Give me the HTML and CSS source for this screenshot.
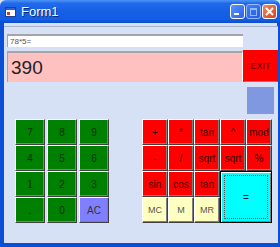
FILE: index.html
```html
<!DOCTYPE html>
<html lang="en">
<head>
    <meta charset="UTF-8">
    <title>Form1</title>
    <link rel="stylesheet" href="styles.css">
</head>
<body>
    <div class="window">
        <div class="titlebar">
            <svg class="app-icon" width="11" height="10" viewBox="0 0 11 10">
                <rect x="0.5" y="0.5" width="10" height="9" fill="#fff" stroke="#1c3f94"/>
                <rect x="1" y="1" width="9" height="2" fill="#2a5fd8"/>
                <rect x="2" y="5" width="3" height="3" fill="#d04020"/>
            </svg>
            <span class="title">Form1</span>
            <div class="title-buttons">
                <div class="tbtn tbtn-min"><span></span></div>
                <div class="tbtn tbtn-max"><span></span></div>
                <div class="tbtn tbtn-close">
                    <svg width="9" height="9" viewBox="0 0 9 9">
                        <path d="M1 1 L8 8 M8 1 L1 8" stroke="#fff" stroke-width="2"/>
                    </svg>
                </div>
            </div>
        </div>
        <div class="frame">
            <div class="client">
                <div class="row-expr">
                    <div class="expr">78*5=</div>
                </div>
                <div class="row-display">
                    <div class="display">390</div>
                    <button class="btn exit">EXIT</button>
                </div>
                <div class="row-mem">
                    <div class="mem-box"></div>
                </div>
                <div class="pads">
                    <div class="pad-num">
                        <button class="btn green">7</button>
                        <button class="btn green">8</button>
                        <button class="btn green">9</button>
                        <button class="btn green">4</button>
                        <button class="btn green">5</button>
                        <button class="btn green">6</button>
                        <button class="btn green">1</button>
                        <button class="btn green">2</button>
                        <button class="btn green">3</button>
                        <button class="btn green">.</button>
                        <button class="btn green">0</button>
                        <button class="btn clear">AC</button>
                    </div>
                    <div class="pad-ops">
                        <button class="btn red">+</button>
                        <button class="btn red">*</button>
                        <button class="btn red">tan</button>
                        <button class="btn red">^</button>
                        <button class="btn red">mod</button>
                        <button class="btn red">-</button>
                        <button class="btn red">/</button>
                        <button class="btn red">sqrt</button>
                        <button class="btn red">sqrt</button>
                        <button class="btn red">%</button>
                        <button class="btn red">sin</button>
                        <button class="btn red">cos</button>
                        <button class="btn red">tan</button>
                        <button class="btn equals"><span>=</span></button>
                        <button class="btn memory">MC</button>
                        <button class="btn memory">M</button>
                        <button class="btn memory">MR</button>
                    </div>
                </div>
            </div>
        </div>
    </div>
</body>
</html>
```

FILE: styles.css
```css
body {
    margin: 0;
    padding: 0;
    background-color: #d7e1f6;
    font-family: "Liberation Sans", Arial, sans-serif;
}
.window {
    width: 280px;
    height: 247px;
    display: flex;
    flex-direction: column;
    overflow: hidden;
}
.titlebar {
    height: 23px;
    display: flex;
    align-items: center;
    padding: 0 3px 0 5px;
    background: linear-gradient(#4a95f8 0%, #2269ea 15%, #1660e6 50%, #125de3 85%, #0a4ccc 100%);
    border-radius: 6px 6px 0 0;
}
.app-icon {
    margin-right: 5px;
}
.title {
    color: #fff;
    font-family: "Liberation Sans", Arial, sans-serif;
    font-size: 13px;
    text-shadow: 1px 1px 0 #0a2a80;
    flex: 1;
}
.title-buttons {
    display: flex;
    gap: 1px;
}
.tbtn {
    width: 13px;
    height: 13px;
    border: 1px solid #fff;
    border-radius: 3px;
    background: linear-gradient(135deg, #5a95ff, #2a62e8);
    position: relative;
}
.tbtn-min span {
    position: absolute;
    left: 3px;
    bottom: 3px;
    width: 5px;
    height: 2px;
    background: #fff;
}
.tbtn-max {
    opacity: 0.55;
}
.tbtn-max span {
    position: absolute;
    left: 3px;
    top: 3px;
    width: 5px;
    height: 5px;
    border: 1px solid #fff;
    border-top-width: 2px;
}
.tbtn-close {
    background: linear-gradient(135deg, #f08a60, #d8401a);
    display: flex;
    align-items: center;
    justify-content: center;
}
.frame {
    flex: 1;
    display: flex;
    border-left: 4px solid #0a4fd6;
    border-right: 3px solid #0a4fd6;
    border-bottom: 4px solid #0a4fd6;
}
.client {
    flex: 1;
    margin-top: 3px;
    border-top: 1px solid #a6b0c6;
    background-color: #d7e1f6;
}
.row-expr {
    padding: 7px 0 0 3px;
}
.expr {
    width: 233px;
    height: 11px;
    background: #fff;
    border-top: 2px solid #a5a5a5;
    border-left: 1px solid #a5a5a5;
    font-size: 8px;
    line-height: 11px;
    color: #555;
    padding-left: 2px;
}
.row-display {
    display: flex;
    align-items: flex-end;
    padding: 3px 0 0 3px;
}
.display {
    width: 231px;
    height: 29px;
    background: #ffc0c0;
    border-top: 2px solid #a5a5a5;
    border-left: 1px solid #a5a5a5;
    border-right: 1px solid #fff;
    padding-left: 3px;
    font-size: 19px;
    line-height: 29px;
    color: #222;
}
.btn {
    margin: 0;
    padding: 0;
    font-family: "Liberation Sans", Arial, sans-serif;
    font-size: 10px;
    color: #1a1a1a;
    border: 1px solid;
    border-color: #fff #404040 #404040 #fff;
    box-shadow: inset -1px -1px 0 #808080;
}
.exit {
    width: 35px;
    height: 32px;
    background: #ff0000;
    color: #600000;
    font-size: 9px;
    border-color: #ff0000 #ff0000 #808080 #ff0000;
    box-shadow: none;
}
.row-mem {
    display: flex;
    justify-content: flex-end;
    padding: 5px 4px 0 0;
}
.mem-box {
    width: 27px;
    height: 27px;
    background: #7f98e0;
}
.pads {
    display: flex;
    padding: 5px 0 0 11px;
    gap: 33px;
}
.pad-num {
    display: grid;
    grid-template-columns: repeat(3, 30px);
    grid-auto-rows: 26px;
    column-gap: 2px;
}
.pad-ops {
    display: grid;
    grid-template-columns: repeat(5, 26px);
    grid-auto-rows: 26px;
}
.green {
    background: #008000;
    color: #0c300c;
}
.clear {
    background: #8080ff;
    color: #333;
}
.red {
    background: #ff0000;
    color: #400000;
}
.memory {
    background: #ffffc0;
    color: #555;
    font-size: 9px;
}
.equals {
    grid-column: 4 / span 2;
    grid-row: 3 / span 2;
    background: #00ffff;
    border: 1px solid #000;
    box-shadow: inset 1px 1px 0 #fff, inset -1px -1px 0 #808080;
    padding: 3px;
    display: flex;
}
.equals span {
    flex: 1;
    display: flex;
    align-items: center;
    justify-content: center;
    border: 1px dotted #555;
}
```
